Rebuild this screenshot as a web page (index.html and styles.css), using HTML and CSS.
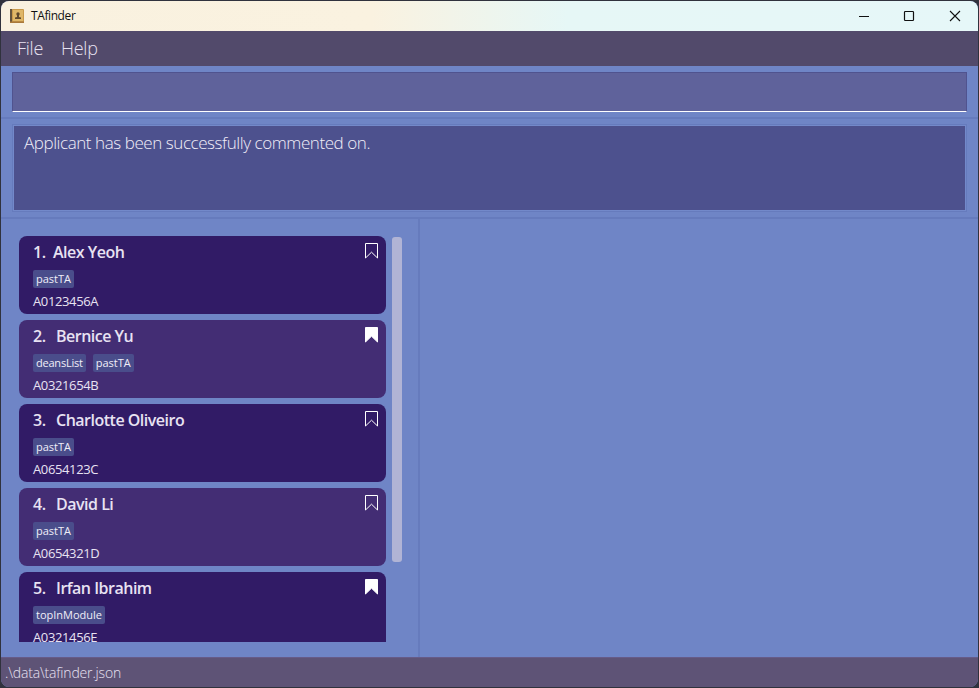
FILE: index.html
```html
<!DOCTYPE html>
<html lang="en">
<head>
<meta charset="utf-8">
<title>TAfinder</title>
<link rel="stylesheet" href="styles.css">
</head>
<body>
<svg class="defs" width="0" height="0" aria-hidden="true">
  <symbol id="mark" viewBox="0 0 14 17"><path d="M.5 .5H12.5V15L6.5 9.2L.5 15Z"/></symbol>
</svg>
<div class="window">
  <header class="titlebar">
    <svg class="logo" width="14" height="14" viewBox="0 0 14 14">
      <rect width="14" height="14" rx="1" fill="#c99a4b"/>
      <rect x="3" y="1" width="10" height="11" fill="#dfb768"/>
      <rect width="2" height="13" fill="#65543d"/>
      <rect y="12.5" width="14" height="1.5" fill="#a9793c"/>
      <circle cx="8" cy="5" r="1.7" fill="#5e482c"/>
      <path d="M7 6H9V8L11 8.5V10H5V8.5L7 8Z" fill="#5e482c"/>
    </svg>
    <span class="title">TAfinder</span>
    <svg class="controls" width="104" height="14" viewBox="0 0 104 14" fill="none" stroke="#111">
      <path d="M1 7.5H11"/>
      <rect x="46.5" y="2.5" width="9" height="9" rx=".8" stroke-width="1.2"/>
      <path d="M92 2L102 12M102 2L92 12" stroke-width="1.1"/>
    </svg>
  </header>
  <nav class="menu"><span class="file">File</span><span class="help">Help</span></nav>
  <section class="command"><div class="input"></div></section>
  <section class="result"><div class="message"><span>Applicant has been successfully commented on.</span></div></section>
  <main class="split">
    <section class="list-pane">
      <div class="list">
        <article class="card">
          <div class="name"><span class="num first">1.</span><span>Alex Yeoh</span></div>
          <div class="tags"><span class="tag">pastTA</span></div>
          <div class="id">A0123456A</div>
          <svg class="mark"><use href="#mark"/></svg>
        </article>
        <article class="card">
          <div class="name"><span class="num">2.</span><span>Bernice Yu</span></div>
          <div class="tags"><span class="tag tight">deansList</span><span class="tag">pastTA</span></div>
          <div class="id">A0321654B</div>
          <svg class="mark filled"><use href="#mark"/></svg>
        </article>
        <article class="card">
          <div class="name"><span class="num">3.</span><span>Charlotte Oliveiro</span></div>
          <div class="tags"><span class="tag">pastTA</span></div>
          <div class="id">A0654123C</div>
          <svg class="mark"><use href="#mark"/></svg>
        </article>
        <article class="card">
          <div class="name"><span class="num">4.</span><span>David Li</span></div>
          <div class="tags"><span class="tag">pastTA</span></div>
          <div class="id">A0654321D</div>
          <svg class="mark"><use href="#mark"/></svg>
        </article>
        <article class="card">
          <div class="name"><span class="num">5.</span><span>Irfan Ibrahim</span></div>
          <div class="tags"><span class="tag">topInModule</span></div>
          <div class="id">A0321456E</div>
          <svg class="mark filled"><use href="#mark"/></svg>
        </article>
      </div>
      <div class="thumb"></div>
    </section>
    <section class="detail"></section>
  </main>
  <footer class="status"><span>.\data\tafinder.json</span></footer>
</div>
</body>
</html>
```
FILE: styles.css
```css
* { box-sizing: border-box; }
body {
  margin: 0;
  width: 979px;
  height: 688px;
  padding: 1px;
  overflow: hidden;
  background: #30323d;
  font-family: "Open Sans", "Noto Sans", sans-serif;
  color: #e8e2f2;
}
.defs { position: absolute; }
.window {
  height: 686px;
  display: flex;
  flex-direction: column;
  overflow: hidden;
  border-radius: 8px;
  background: #6f85c6;
}
.titlebar {
  flex: none;
  height: 30px;
  display: flex;
  align-items: center;
  padding: 0 16px 1px 9px;
  background: linear-gradient(90deg, #f9f1df 0%, #faf2e0 38%, #e6f7f6 58%, #e6f7f8 100%);
  color: #111;
}
.title { margin-left: 7px; font-size: 12px; letter-spacing: -0.4px; }
.controls { margin-left: auto; }
.menu {
  flex: none;
  height: 35px;
  display: flex;
  align-items: center;
  gap: 18px;
  padding: 0 0 2px 16px;
  font-size: 18px;
  font-weight: 300;
  letter-spacing: -0.25px;
  background: #524a6b;
}
.file { width: 26px; }
.command {
  flex: none;
  height: 53px;
  padding: 6px 11px;
  border-bottom: 2px solid #667bbd;
}
.input {
  height: 40px;
  background: #5f629b;
  border: 1px solid #50538f;
  border-bottom: 1px solid #fff;
}
.result {
  flex: none;
  height: 100px;
  padding: 5px 11px;
  border-bottom: 2px solid #667bbd;
}
.message {
  height: 88px;
  padding: 7px 11px;
  border: 1px solid #667bbd;
  outline: 1px solid #7389ca;
  outline-offset: -2px;
  background: #4d518e;
  color: #f1eef8;
  font-size: 17px;
  font-weight: 300;
  letter-spacing: -0.43px;
  line-height: 22px;
}
.split { flex: 1; min-height: 0; display: flex; }
.list-pane {
  width: 419px;
  display: flex;
  align-items: flex-start;
  gap: 6px;
  padding: 17px 0 15px 18px;
  border-right: 2px solid #667bbd;
}
.list {
  width: 367px;
  height: 406px;
  display: flex;
  flex-direction: column;
  gap: 6px;
  overflow: hidden;
}
.card {
  position: relative;
  flex: none;
  height: 78px;
  padding: 5px 14px;
  border-radius: 8px;
  background: #311b66;
}
.card:nth-child(even) { background: #432d74; }
.name {
  display: flex;
  height: 24px;
  font-size: 16px;
  line-height: 23px;
  font-weight: 600;
  letter-spacing: -0.5px;
}
.num { width: 23px; }
.first { width: 20px; }
.tags { display: flex; gap: 7px; margin-top: 5px; height: 18px; }
.tag {
  padding: 0 3px;
  border-radius: 2px;
  background: #4a4d8b;
  color: #f0eef8;
  font-size: 11px;
  line-height: 18px;
}
.tight { letter-spacing: -0.22px; }
.id { margin-top: 4px; font-size: 13px; line-height: 18px; letter-spacing: -0.37px; }
.mark {
  position: absolute;
  right: 7px;
  top: 7px;
  width: 14px;
  height: 17px;
  fill: none;
  stroke: #fff;
  stroke-width: 1;
}
.filled { fill: #fff; }
.thumb {
  width: 10px;
  height: 325px;
  margin-top: 1px;
  border-radius: 3px;
  background: #b1b4d5;
}
.detail { flex: 1; }
.status {
  flex: none;
  height: 30px;
  padding-left: 4px;
  border-top: 1px solid #665b88;
  background: #5e5376;
  font-size: 14px;
  font-weight: 300;
  letter-spacing: -0.17px;
  line-height: 30px;
}
```
